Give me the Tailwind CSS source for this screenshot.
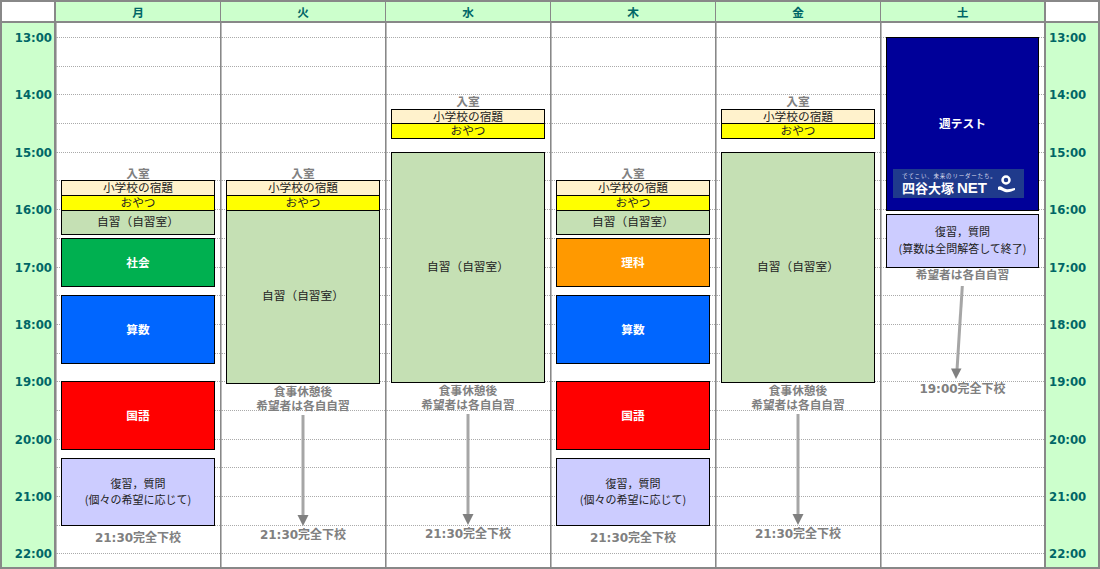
<!DOCTYPE html>
<html lang="ja">
<head>
  <meta charset="UTF-8" />
  <title>時間割</title>
  <script src="https://cdn.jsdelivr.net/npm/@tailwindcss/browser@4"></script>
</head>
<body class="bg-white font-['Noto_Sans_CJK_JP','Noto_Sans',sans-serif] text-[11.7px] text-[#222]">

  <div class="w-[1100px] h-[569px] bg-[#888] p-[2px] grid grid-cols-[53px_164px_164px_164px_164px_164px_163px_53px] grid-rows-[19px_544px] gap-x-px gap-y-[2px] overflow-hidden">

    <!-- header -->
    <div class="bg-white border-r border-[#888]"></div>
    <div class="bg-[#ccffcc] text-[#006666] font-bold flex items-center justify-center pt-px">月</div>
    <div class="bg-[#ccffcc] text-[#006666] font-bold flex items-center justify-center pt-px">火</div>
    <div class="bg-[#ccffcc] text-[#006666] font-bold flex items-center justify-center pt-px">水</div>
    <div class="bg-[#ccffcc] text-[#006666] font-bold flex items-center justify-center pt-px">木</div>
    <div class="bg-[#ccffcc] text-[#006666] font-bold flex items-center justify-center pt-px">金</div>
    <div class="bg-[#ccffcc] text-[#006666] font-bold flex items-center justify-center pt-px">土</div>
    <div class="bg-white border-l border-[#888]"></div>

    <!-- left times -->
    <div class="times bg-[#ccffcc] border-r border-[#888] pt-[6px] pr-[2px] text-right font-['DejaVu_Sans',sans-serif] font-bold text-[11.7px] text-[#006666]"></div>

    <!-- 月 -->
    <div class="day relative bg-white shadow-[inset_1px_0_0_#bbb]">
      <div class="lines pt-[14px]"></div>
      <div class="absolute inset-0 px-[5px] flex flex-col">
        <div class="mt-[143px] h-[14px] leading-[13px] text-center font-bold text-[#808080]">入室</div>
        <div class="h-[16px] leading-[12px] border border-black bg-[#fff2cc] text-center">小学校の宿題</div>
        <div class="-mt-px h-[16px] leading-[12px] border border-black bg-[#ffff00] text-center">おやつ</div>
        <div class="-mt-px h-[25px] pb-[3px] border border-black bg-[#c5e0b4] flex items-center justify-center">自習（自習室）</div>
        <div class="mt-[3px] h-[49px] pb-[2px] border border-black bg-[#00b050] text-white font-bold flex items-center justify-center">社会</div>
        <div class="mt-[8px] h-[69px] pb-[2px] border border-black bg-[#0066ff] text-white font-bold flex items-center justify-center">算数</div>
        <div class="mt-[17px] h-[69px] pb-[2px] border border-black bg-[#ff0000] text-white font-bold flex items-center justify-center">国語</div>
        <div class="mt-[8px] h-[68px] pb-[3px] border border-black bg-[#ccccff] text-[11px] leading-[16px] flex flex-col items-center justify-center">
          <span>復習，質問</span>
          <span>(個々の希望に応じて)</span>
        </div>
        <div class="mt-[4px] h-[16px] leading-[16px] text-center font-['DejaVu_Sans','Noto_Sans_CJK_JP',sans-serif] font-bold text-[#808080] text-[12px]">21:30完全下校</div>
      </div>
    </div>

    <!-- 火 -->
    <div class="day relative bg-white shadow-[inset_1px_0_0_#bbb]">
      <div class="lines pt-[14px]"></div>
      <div class="absolute inset-0 px-[5px] flex flex-col">
        <div class="mt-[143px] h-[14px] leading-[13px] text-center font-bold text-[#808080]">入室</div>
        <div class="h-[16px] leading-[12px] border border-black bg-[#fff2cc] text-center">小学校の宿題</div>
        <div class="-mt-px h-[16px] leading-[12px] border border-black bg-[#ffff00] text-center">おやつ</div>
        <div class="-mt-px h-[174px] pb-[4px] border border-black bg-[#c5e0b4] flex items-center justify-center">自習（自習室）</div>
        <div class="h-[14px] leading-[13px] text-center font-bold text-[#808080]">食事休憩後</div>
        <div class="h-[13px] leading-[13px] text-center font-bold text-[#808080]">希望者は各自自習</div>
        <svg class="mt-[4px] block" width="154" height="111" viewBox="0 0 154 111"><path d="M77 0V101" stroke="#a6a6a6" stroke-width="3" /><path d="M71.500 100H82.500L77 111Z" fill="#808080" /></svg>
        <div class="mt-px h-[16px] leading-[16px] text-center font-['DejaVu_Sans','Noto_Sans_CJK_JP',sans-serif] font-bold text-[#808080] text-[12px]">21:30完全下校</div>
      </div>
    </div>

    <!-- 水 -->
    <div class="day relative bg-white shadow-[inset_1px_0_0_#bbb]">
      <div class="lines pt-[14px]"></div>
      <div class="absolute inset-0 px-[5px] flex flex-col">
        <div class="mt-[71px] h-[15px] leading-[13px] text-center font-bold text-[#808080]">入室</div>
        <div class="h-[15px] leading-[12px] border border-black bg-[#fff2cc] text-center">小学校の宿題</div>
        <div class="-mt-px h-[16px] leading-[12px] border border-black bg-[#ffff00] text-center">おやつ</div>
        <div class="mt-[13px] h-[231px] pb-[4px] border border-black bg-[#c5e0b4] flex items-center justify-center">自習（自習室）</div>
        <div class="h-[14px] leading-[13px] text-center font-bold text-[#808080]">食事休憩後</div>
        <div class="h-[13px] leading-[13px] text-center font-bold text-[#808080]">希望者は各自自習</div>
        <svg class="mt-[4px] block" width="154" height="111" viewBox="0 0 154 111"><path d="M77 0V101" stroke="#a6a6a6" stroke-width="3" /><path d="M71.500 100H82.500L77 111Z" fill="#808080" /></svg>
        <div class="mt-px h-[16px] leading-[16px] text-center font-['DejaVu_Sans','Noto_Sans_CJK_JP',sans-serif] font-bold text-[#808080] text-[12px]">21:30完全下校</div>
      </div>
    </div>

    <!-- 木 -->
    <div class="day relative bg-white shadow-[inset_1px_0_0_#bbb]">
      <div class="lines pt-[14px]"></div>
      <div class="absolute inset-0 px-[5px] flex flex-col">
        <div class="mt-[143px] h-[14px] leading-[13px] text-center font-bold text-[#808080]">入室</div>
        <div class="h-[16px] leading-[12px] border border-black bg-[#fff2cc] text-center">小学校の宿題</div>
        <div class="-mt-px h-[16px] leading-[12px] border border-black bg-[#ffff00] text-center">おやつ</div>
        <div class="-mt-px h-[25px] pb-[3px] border border-black bg-[#c5e0b4] flex items-center justify-center">自習（自習室）</div>
        <div class="mt-[3px] h-[49px] pb-[2px] border border-black bg-[#ff9900] text-white font-bold flex items-center justify-center">理科</div>
        <div class="mt-[8px] h-[69px] pb-[2px] border border-black bg-[#0066ff] text-white font-bold flex items-center justify-center">算数</div>
        <div class="mt-[17px] h-[69px] pb-[2px] border border-black bg-[#ff0000] text-white font-bold flex items-center justify-center">国語</div>
        <div class="mt-[8px] h-[68px] pb-[3px] border border-black bg-[#ccccff] text-[11px] leading-[16px] flex flex-col items-center justify-center">
          <span>復習，質問</span>
          <span>(個々の希望に応じて)</span>
        </div>
        <div class="mt-[4px] h-[16px] leading-[16px] text-center font-['DejaVu_Sans','Noto_Sans_CJK_JP',sans-serif] font-bold text-[#808080] text-[12px]">21:30完全下校</div>
      </div>
    </div>

    <!-- 金 -->
    <div class="day relative bg-white shadow-[inset_1px_0_0_#bbb]">
      <div class="lines pt-[14px]"></div>
      <div class="absolute inset-0 px-[5px] flex flex-col">
        <div class="mt-[71px] h-[15px] leading-[13px] text-center font-bold text-[#808080]">入室</div>
        <div class="h-[15px] leading-[12px] border border-black bg-[#fff2cc] text-center">小学校の宿題</div>
        <div class="-mt-px h-[16px] leading-[12px] border border-black bg-[#ffff00] text-center">おやつ</div>
        <div class="mt-[13px] h-[231px] pb-[4px] border border-black bg-[#c5e0b4] flex items-center justify-center">自習（自習室）</div>
        <div class="h-[14px] leading-[13px] text-center font-bold text-[#808080]">食事休憩後</div>
        <div class="h-[13px] leading-[13px] text-center font-bold text-[#808080]">希望者は各自自習</div>
        <svg class="mt-[4px] block" width="154" height="111" viewBox="0 0 154 111"><path d="M77 0V101" stroke="#a6a6a6" stroke-width="3" /><path d="M71.500 100H82.500L77 111Z" fill="#808080" /></svg>
        <div class="mt-px h-[16px] leading-[16px] text-center font-['DejaVu_Sans','Noto_Sans_CJK_JP',sans-serif] font-bold text-[#808080] text-[12px]">21:30完全下校</div>
      </div>
    </div>

    <!-- 土 -->
    <div class="day relative bg-white shadow-[inset_1px_0_0_#bbb]">
      <div class="lines pt-[14px]"></div>
      <div class="absolute inset-0 px-[5px] flex flex-col">
        <div class="mt-[14px] h-[174px] border border-black bg-[#000099] text-white flex flex-col items-center">
          <div class="mt-[77px] h-[16px] leading-[16px] text-[11.7px] font-bold">週テスト</div>
          <div class="mt-[38px] self-start ml-[6px] w-[131px] h-[29px] bg-[#1f3a8c] flex items-center pl-[9px] pr-[8px] justify-between">
            <div>
              <div class="text-[5.5px] leading-[8px] tracking-[0.8px] text-[#dde]">でてこい、未来のリーダーたち。</div>
              <div class="text-[13px] leading-[15px] font-bold whitespace-nowrap">四谷大塚 <span class="font-['Liberation_Sans',sans-serif] text-[15px]">NET</span></div>
            </div>
            <svg width="19" height="18" viewBox="0 0 19 18"><circle cx="9" cy="5" r="3.500" fill="none" stroke="#fff" stroke-width="2.500" /><path d="M1 12C4 10 5 13 9 14C12 15 15 13 18 13V15C15 16 12 18 8 17C5 16 3 14 1 15Z" fill="#fff" /></svg>
          </div>
        </div>
        <div class="mt-[3px] h-[54px] pb-[3px] border border-black bg-[#ccccff] text-[11px] leading-[17px] flex flex-col items-center justify-center">
          <span>復習，質問</span>
          <span>(算数は全問解答して終了)</span>
        </div>
        <div class="-mt-px h-[15px] leading-[13px] text-center font-bold text-[#808080]">希望者は各自自習</div>
        <svg class="mt-[4px] block" width="154" height="93" viewBox="0 0 154 93"><path d="M76.300 0L71 84" stroke="#a6a6a6" stroke-width="3" /><path d="M65 82.500H75.500L70 93Z" fill="#808080" /></svg>
        <div class="mt-[2px] h-[16px] leading-[16px] text-center font-['DejaVu_Sans','Noto_Sans_CJK_JP',sans-serif] font-bold text-[#808080] text-[12px]">19:00完全下校</div>
      </div>
    </div>

    <!-- right times -->
    <div class="times bg-[#ccffcc] border-l border-[#888] pt-[6px] pl-[3px] font-['DejaVu_Sans',sans-serif] font-bold text-[11.7px] text-[#006666]"></div>
  </div>

  <script>
    // half-hour rules in each day column
    document.querySelectorAll(".lines").forEach((el) => {
      for (let i = 0; i < 19; i++) {
        const row = document.createElement("div");
        row.className = "h-[28.69px] border-t border-dotted border-[#aaa]";
        el.appendChild(row);
      }
    });

    // hour labels on both sides
    document.querySelectorAll(".times").forEach((el) => {
      for (let h = 13; h <= 22; h++) {
        const label = document.createElement("div");
        label.className = "h-[57.38px] leading-[18px]";
        label.textContent = h + ":00";
        el.appendChild(label);
      }
    });
  </script>

</body>
</html>
